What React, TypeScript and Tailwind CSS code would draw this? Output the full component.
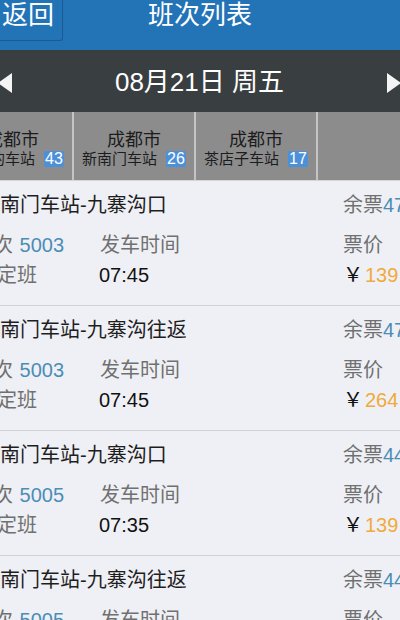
import React from "react";

const FONT = {
  fontFamily: '"Liberation Sans", "Noto Sans CJK SC", sans-serif',
};

const tabs = [
  { city: "成都市", station: "城北的车站", n: "43" },
  { city: "成都市", station: "新南门车站", n: "26" },
  { city: "成都市", station: "茶店子车站", n: "17" },
  null,
];

const rows = [
  { title: "新南门车站-九寨沟口", no: "5003", time: "07:45", left: "47", price: "139" },
  { title: "新南门车站-九寨沟往返", no: "5003", time: "07:45", left: "47", price: "264" },
  { title: "新南门车站-九寨沟口", no: "5005", time: "07:35", left: "44", price: "139" },
  { title: "新南门车站-九寨沟往返", no: "5005", time: "07:35", left: "44", price: "264" },
];

export default function App() {
  return (
    <div style={FONT} className="w-[400px] h-[620px] overflow-hidden bg-[#eff0f5]">
      {/* Header */}
      <div className="h-[50px] bg-[#2373b7] grid grid-cols-[1fr_auto_1fr] items-start">
        <div>
          <div className="w-[63px] h-[41px] border-r border-b border-[#1b5b94] rounded-br-[3px] text-white text-[26px] leading-[30px] pl-[2px] pt-0">
            返回
          </div>
        </div>
        <div className="text-white text-[26px] leading-[30px] tracking-[0px]">班次列表</div>
        <div />
      </div>

      {/* Date bar */}
      <div className="h-[62px] bg-[#393e41] flex items-center justify-between overflow-hidden">
        <svg width="14" height="20" viewBox="0 0 14 20" className="-ml-[2px] mt-[3px]">
          <polygon points="0,10 14,0 14,20" fill="#f4f4f4" />
        </svg>
        <div className="text-white text-[26px] leading-[30px] whitespace-nowrap mt-[2px]">08月21日 周五</div>
        <svg width="14" height="20" viewBox="0 0 14 20" className="-mr-[1px] mt-[3px]">
          <polygon points="14,10 0,0 0,20" fill="#f4f4f4" />
        </svg>
      </div>

      {/* Tabs */}
      <div className="h-[69px] bg-[#8c8c8c] border-b border-[#d6d6d8] overflow-hidden">
        <div className="flex h-full -ml-[48px]">
          {tabs.map((t, i) => (
            <div
              key={i}
              className="w-[122px] shrink-0 h-full border-r-2 border-[#c4c4c4] flex flex-col items-center pt-[18px] text-[#1c1c1c]"
            >
              {t && (
                <>
                  <div className="text-[18px] leading-[20px] whitespace-nowrap">{t.city}</div>
                  <div className="flex items-center gap-[9px] text-[15px] leading-[18px] whitespace-nowrap">
                    <span>{t.station}</span>
                    <span className="bg-[#4b90d9] text-white px-[1px] h-[16px] leading-[16px] text-[16px] rounded-[2px]">{t.n}</span>
                  </div>
                </>
              )}
            </div>
          ))}
        </div>
      </div>

      {/* List */}
      {rows.map((r, i) => (
        <div
          key={i}
          className="border-b border-[#cfd0d4] pt-[12px] pb-[15px] overflow-hidden grid grid-cols-[100px_243px_57px] text-[20px] whitespace-nowrap"
        >
          <div className="col-span-2 -ml-[20px] leading-[24px] text-[#1e1e1e]">{r.title}</div>
          <div className="leading-[24px] text-[#707070]">
            余票<span className="text-[#4b8db5]">{r.left}</span>
          </div>

          <div className="mt-[13px] -ml-[27px] leading-[30px] text-[#707070]">
            班次 <span className="text-[#4b8db5] ml-[1px]">{r.no}</span>
          </div>
          <div className="mt-[13px] leading-[30px] text-[#707070]">发车时间</div>
          <div className="mt-[13px] leading-[30px] text-[#707070]">票价</div>

          <div className="-ml-[23px] leading-[30px] text-[#707070]">固定班</div>
          <div className="-ml-[1px] leading-[30px] text-[#111111]">{r.time}</div>
          <div className="leading-[30px] text-[#111111]">
            ￥<span className="text-[#f0aa3a] ml-[2px]">{r.price}</span>
          </div>
        </div>
      ))}
    </div>
  );
}
